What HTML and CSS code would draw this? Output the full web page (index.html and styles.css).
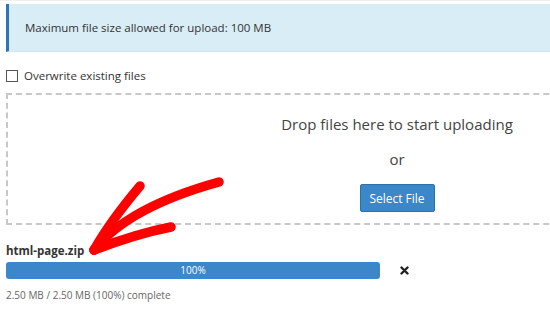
FILE: index.html
```html
<!DOCTYPE html>
<html lang="en">
<head>
  <meta charset="UTF-8">
  <title>Upload Files</title>
  <link rel="stylesheet" href="styles.css">
</head>
<body>

<div class="page">
  <div class="alert-info">Maximum file size allowed for upload: 100 MB</div>

  <label class="overwrite">
    <span class="check"></span>
    Overwrite existing files
  </label>

  <div class="drop-zone">
    <div class="drop-text">Drop files here to start uploading</div>
    <div class="drop-or">or</div>
    <button class="btn-primary">Select File</button>
  </div>

  <div class="upload">
    <div class="file-name">html-page.zip</div>
    <div class="progress-row">
      <div class="progress">
        <div class="progress-bar" style="width: 100%">100%</div>
      </div>
      <svg class="cancel" width="9" height="9" viewBox="0 0 9 9">
        <path d="M1.5 1.5 L7.5 7.5 M7.5 1.5 L1.5 7.5" stroke="#222" stroke-width="2.4" stroke-linecap="round" />
      </svg>
    </div>
    <div class="file-status">2.50 MB / 2.50 MB (100%) complete</div>
  </div>

  <!-- annotation arrow -->
  <svg class="arrow" width="550" height="311" viewBox="0 0 550 311">
    <g fill="none" stroke="#ff0000" stroke-width="9.5" stroke-linecap="round" stroke-linejoin="round">
      <path d="M219 181 C 172 194, 122 214, 94 249" />
      <path d="M140 185 C 124 204, 108 224, 94 249" />
      <path d="M171 226 C 145 231, 120 239, 94 249" />
    </g>
  </svg>
</div>

</body>
</html>
```

FILE: styles.css
```css
body {
  margin: 0;
  font-family: "Open Sans", Arial, sans-serif;
  color: #333;
  background: #fff;
  overflow: hidden;
}

.page {
  position: relative;
  width: 550px;
  height: 311px;
  overflow: hidden;
  padding: 3px 0 0 6px;
  box-sizing: border-box;
  border-top: 1px solid #f0f0f0;
}

/* Info alert */
.alert-info {
  width: 800px;
  height: 48px;
  box-sizing: border-box;
  background: #d9edf7;
  border-left: 3px solid #2f74b5;
  border-bottom: 1px solid #cfe6f3;
  padding: 0 0 0 16px;
  display: flex;
  align-items: center;
  font-size: 11.5px;
  color: #333;
}

.overwrite {
  display: flex;
  align-items: center;
  gap: 6px;
  margin-top: 16px;
  font-size: 11.5px;
  color: #333;
}

.check {
  width: 10px;
  height: 10px;
  border: 1px solid #555;
  background: #fff;
}

/* Drop zone */
.drop-zone {
  width: 782px;
  height: 132px;
  box-sizing: border-box;
  margin-top: 10px;
  border: 2px dashed #c8c8c8;
  text-align: center;
  padding-top: 19px;
}

.drop-text {
  font-size: 15px;
  line-height: 20px;
  color: #444;
}

.drop-or {
  font-size: 15px;
  line-height: 20px;
  color: #444;
  margin-top: 15px;
}

.btn-primary {
  display: block;
  margin: 15px auto 0;
  width: 75px;
  height: 28px;
  background: #3b87c9;
  border: 1px solid #2e70a8;
  border-radius: 2px;
  color: #fff;
  font-family: "Open Sans", Arial, sans-serif;
  font-size: 12px;
  padding: 0;
}

/* Upload progress */
.upload {
  margin-top: 18px;
}

.file-name {
  font-size: 11.5px;
  line-height: 16px;
  font-weight: bold;
  color: #333;
}

.progress-row {
  display: flex;
  align-items: center;
  margin-top: 3px;
}

.progress {
  width: 374px;
  height: 17px;
  background: #eee;
  border-radius: 3px;
  overflow: hidden;
}

.progress-bar {
  height: 100%;
  background: #3b87c9;
  color: #fff;
  font-size: 10px;
  line-height: 17px;
  text-align: center;
}

.cancel {
  margin-left: 20px;
}

.file-status {
  margin-top: 9px;
  font-size: 10px;
  line-height: 14px;
  color: #666;
}

.arrow {
  position: absolute;
  left: 0;
  top: 0;
  pointer-events: none;
}
```
